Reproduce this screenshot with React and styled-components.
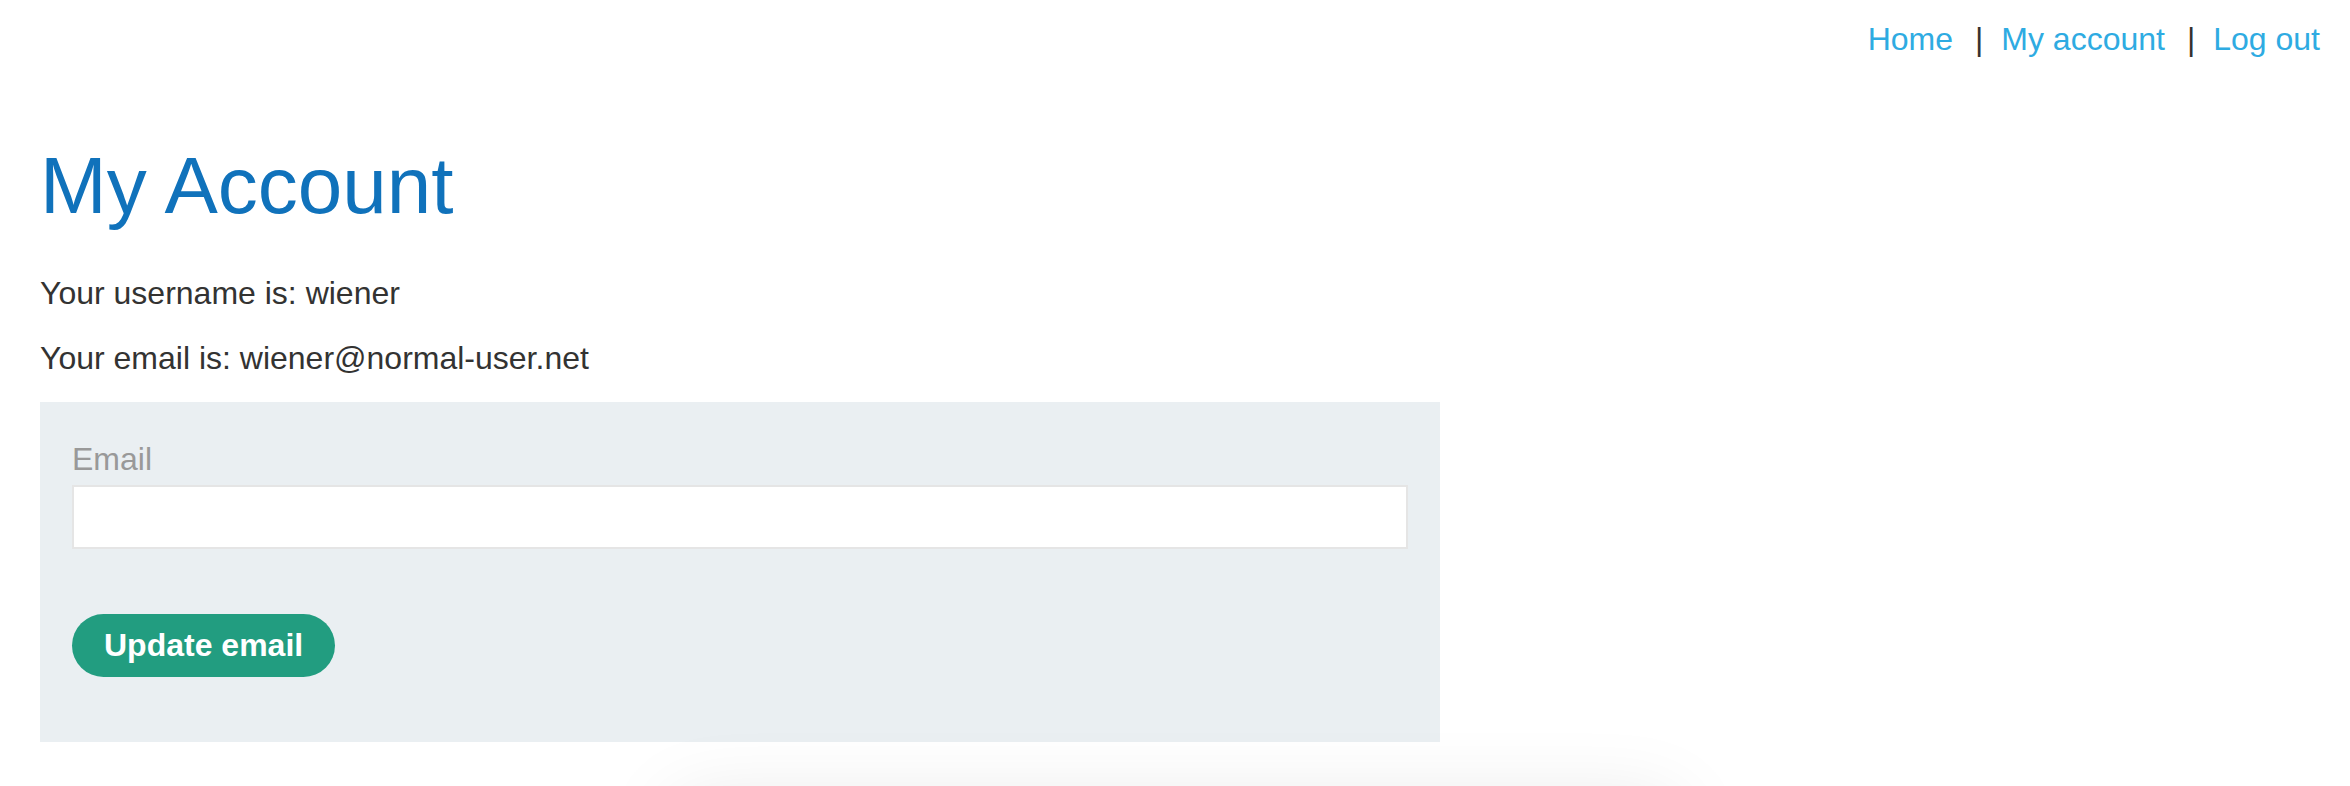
import React from "react";
import styled, { createGlobalStyle } from "styled-components";

const Global = createGlobalStyle`
  html, body {
    margin: 0;
    padding: 0;
    background: #ffffff;
  }
  body {
    font-family: "Liberation Sans", Arial, sans-serif;
    color: #333332;
  }
  * { box-sizing: border-box; }
`;

const Page = styled.div`
  display: flex;
  flex-direction: column;
  min-height: 100vh;
`;

const Header = styled.nav`
  display: flex;
  justify-content: flex-end;
  align-items: center;
  padding: 19px 30px 0 0;
  font-size: 32px;
  line-height: 40px;
`;

const NavLink = styled.a`
  color: #2eabe2;
  text-decoration: none;
  cursor: pointer;
`;

const Sep = styled.span`
  color: #333332;
  margin: 0 18px 0 22px;
`;

const Main = styled.main`
  padding: 0 40px;
`;

const Title = styled.h1`
  margin: 79px 0 0;
  font-size: 80px;
  line-height: 96px;
  font-weight: 400;
  color: #1072bb;
`;

const Info = styled.p`
  margin: ${(p) => (p.$first ? "39px" : "24.5px")} 0 0;
  font-size: 32px;
  line-height: 40px;
  color: #333332;
`;

const Panel = styled.form`
  width: 1400px;
  margin-top: 24.5px;
  padding: 37px 32px 65px;
  background: #eaeff2;
  display: flex;
  flex-direction: column;
  align-items: flex-start;
`;

const Label = styled.label`
  font-size: 32px;
  line-height: 40px;
  color: #999999;
`;

const Input = styled.input`
  width: 100%;
  height: 64px;
  margin-top: 6px;
  border: 2px solid #e5e5e5;
  background: #ffffff;
  font-size: 32px;
  font-family: inherit;
  padding: 0 16px;
  outline: none;
`;

const Button = styled.button`
  margin-top: 65px;
  height: 63px;
  padding: 0 32px 2px;
  display: inline-flex;
  align-items: center;
  border: none;
  border-radius: 32px;
  background: #229d80;
  color: #ffffff;
  font-family: "Liberation Sans", Arial, sans-serif;
  font-weight: 700;
  font-size: 32px;
  line-height: 32px;
  cursor: pointer;
`;

const Footer = styled.footer`
  align-self: center;
  width: 1000px;
  height: 120px;
  margin-top: 60px;
  background: #ffffff;
  box-shadow: 0 0 80px rgba(0, 0, 0, 0.1);
`;

export default function App() {
  return (
    <>
      <Global />
      <Page>
        <Header>
          <NavLink>Home</NavLink>
          <Sep>|</Sep>
          <NavLink>My account</NavLink>
          <Sep>|</Sep>
          <NavLink>Log out</NavLink>
        </Header>
        <Main>
          <Title>My Account</Title>
          <Info $first>Your username is: wiener</Info>
          <Info>Your email is: wiener@normal-user.net</Info>
          <Panel onSubmit={(e) => e.preventDefault()}>
            <Label htmlFor="email">Email</Label>
            <Input id="email" type="email" name="email" />
            <Button type="submit">Update email</Button>
          </Panel>
        </Main>
        <Footer />
      </Page>
    </>
  );
}
